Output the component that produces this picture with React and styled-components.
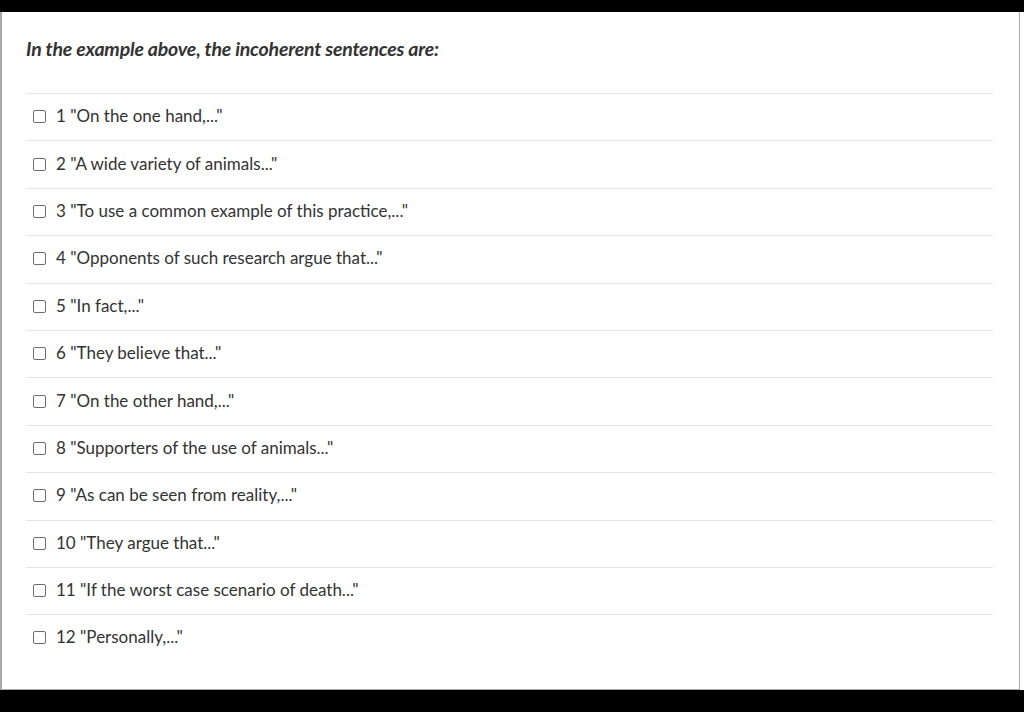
import React from "react";
import styled, { createGlobalStyle } from "styled-components";

const GlobalStyle = createGlobalStyle`
  html, body {
    margin: 0;
    padding: 0;
    background: #000;
  }
  body {
    font-family: Lato, "Open Sans", "Liberation Sans", sans-serif;
  }
`;

const options = [
  '1 "On the one hand,..."',
  '2 "A wide variety of animals..."',
  '3 "To use a common example of this practice,..."',
  '4 "Opponents of such research argue that..."',
  '5 "In fact,..."',
  '6 "They believe that..."',
  '7 "On the other hand,..."',
  '8 "Supporters of the use of animals..."',
  '9 "As can be seen from reality,..."',
  '10 "They argue that..."',
  '11 "If the worst case scenario of death..."',
  '12 "Personally,..."',
];

const App = () => {
  return (
    <>
      <GlobalStyle />
      <Screen>
        <Sheet>
          <Panel>
            <Question>In the example above, the incoherent sentences are:</Question>
            <OptionList>
              {options.map((text) => (
                <Option key={text}>
                  <Box />
                  <Label>{text}</Label>
                </Option>
              ))}
            </OptionList>
          </Panel>
        </Sheet>
      </Screen>
    </>
  );
};

export default App;

const Screen = styled.div`
  width: 1024px;
  height: 712px;
  padding-top: 12px;
  box-sizing: border-box;
  background: #000;
`;

const Sheet = styled.div`
  background: #fff;
  height: 678px;
`;

const Panel = styled.div`
  width: 1020px;
  height: 678px;
  box-sizing: border-box;
  border: 1px solid #a8a8a8;
  border-top: none;
  border-left-width: 2px;
  padding: 25px 26px 0 24px;
`;

const Question = styled.h2`
  margin: 0;
  font-size: 19.5px;
  line-height: 24px;
  font-weight: 700;
  font-style: italic;
  color: #333;
  letter-spacing: -0.2px;
`;

const OptionList = styled.div`
  margin-top: 32px;
`;

const Option = styled.label`
  display: flex;
  align-items: center;
  height: 47.4px;
  box-sizing: border-box;
  border-top: 1.5px solid #e6e6e6;
  padding-left: 7px;
  padding-bottom: 3px;
`;

const Box = styled.span`
  width: 11px;
  height: 11px;
  border: 1.5px solid #6e6e6e;
  border-radius: 2px;
  flex-shrink: 0;
  margin-right: 10px;
  margin-top: 2px;
`;

const Label = styled.span`
  font-size: 17px;
  color: #333;
`;
